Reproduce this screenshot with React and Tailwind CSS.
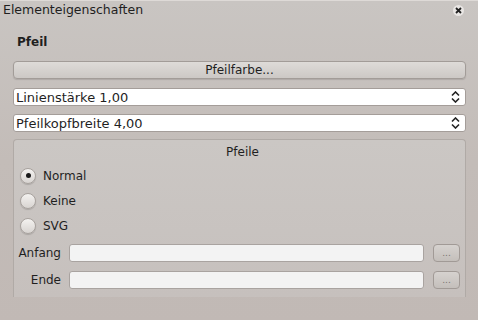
import React from 'react';

function Radio({ checked, label }) {
  return (
    <div className="flex items-center h-[25px]">
      <div className="w-[16px] h-[16px] rounded-full border border-[#a8a29e] bg-gradient-to-b from-[#f4f2f0] to-[#d8d4d1] shadow-[0_1px_1px_rgba(0,0,0,0.15)] flex items-center justify-center">
        {checked ? <div className="w-[5px] h-[5px] rounded-full bg-[#1a1a1a]" /> : null}
      </div>
      <span className="ml-[7px]">{label}</span>
    </div>
  );
}

function Spin({ text }) {
  return (
    <div className="h-[18px] rounded-[3px] border border-[#a49d99] bg-white flex items-center justify-between pl-[2px] pr-[5px]">
      <span className="leading-none text-[13px]">{text}</span>
      <svg width="9" height="12" viewBox="0 0 9 12" fill="none" stroke="#222" strokeWidth="1.6">
        <path d="M1 4.5 L4.5 1 L8 4.5" />
        <path d="M1 7.5 L4.5 11 L8 7.5" />
      </svg>
    </div>
  );
}

function FileRow({ label }) {
  return (
    <div className="flex items-center h-[18px]">
      <span className="w-[43px] text-right">{label}</span>
      <div className="ml-[8px] w-[355px] h-[18px] rounded-[3px] border border-[#a9a3a0] bg-[#f3f3f3]" />
      <div className="ml-[9px] w-[27px] h-[18px] rounded-[4px] border border-[#a19a96] bg-gradient-to-b from-[#d6d2cf] to-[#c4bfbb] flex items-center justify-center text-[9px] text-[#7a7470] leading-none">
        ...
      </div>
    </div>
  );
}

export default function App() {
  return (
    <div
      className="w-[478px] h-[320px] overflow-hidden bg-gradient-to-b from-[#c9c5c2] via-[#c3bcb8] to-[#c1b9b5] text-[12px] text-[#1f1f1f] border-t border-[#dedad7]"
      style={{ fontFamily: '"DejaVu Sans", sans-serif' }}
    >
      <div className="h-[19px] flex items-center justify-between pl-[3px] pr-[14px]">
        <span className="text-[12.5px]">Elementeigenschaften</span>
        <div className="w-[11px] h-[11px] rounded-full bg-[#e9e6e4] flex items-center justify-center">
          <svg width="7" height="7" viewBox="0 0 7 7" stroke="#222" strokeWidth="1.8">
            <path d="M1 1 L6 6 M6 1 L1 6" />
          </svg>
        </div>
      </div>

      <div className="pr-[12px] pl-[13px] flex flex-col">
        <div className="mt-[15px] pl-[4px] font-bold leading-[14px]">Pfeil</div>

        <div className="mt-[12px] h-[18px] rounded-[4px] border border-[#a29c98] bg-gradient-to-b from-[#dedbd8] to-[#ccc8c5] shadow-[0_1px_1px_rgba(0,0,0,0.12)] flex items-center justify-center leading-none">
          Pfeilfarbe...
        </div>

        <div className="mt-[9px]">
          <Spin text="Linienstärke 1,00" />
        </div>
        <div className="mt-[8px]">
          <Spin text="Pfeilkopfbreite 4,00" />
        </div>

        <div className="mt-[7px] h-[158px] rounded-t-[4px] border-t border-l border-r border-[#b0aaa6] bg-gradient-to-b from-[#cbc7c4] to-[#c6c0bd] pl-[6px]">
          <div className="text-center leading-[14px] mt-[5px]">Pfeile</div>
          <div className="mt-[4px] flex flex-col">
            <Radio checked label="Normal" />
            <Radio label="Keine" />
            <Radio label="SVG" />
          </div>
          <div className="mt-[6px] -ml-[2px] flex flex-col gap-[9px]">
            <FileRow label="Anfang" />
            <FileRow label="Ende" />
          </div>
        </div>
      </div>
    </div>
  );
}
